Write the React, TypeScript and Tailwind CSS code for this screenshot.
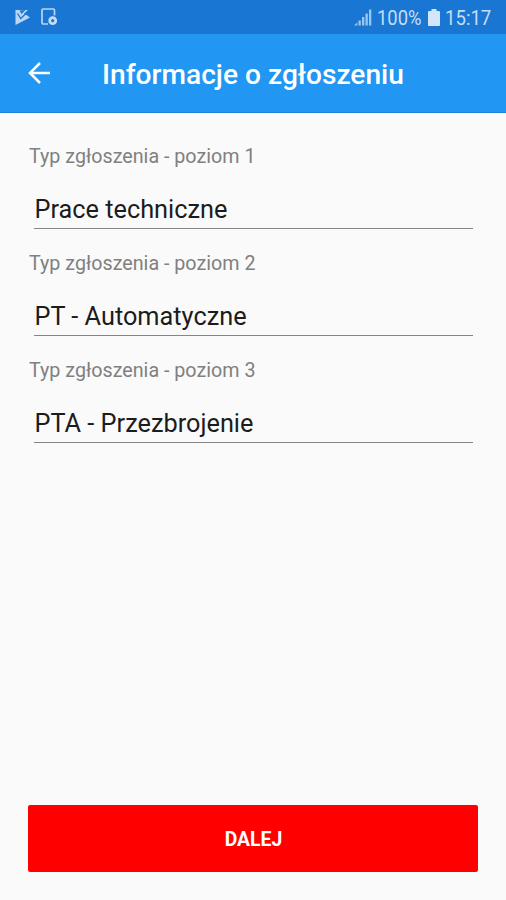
const fields = [
  { label: 'Typ zgłoszenia - poziom 1', value: 'Prace techniczne' },
  { label: 'Typ zgłoszenia - poziom 2', value: 'PT - Automatyczne' },
  { label: 'Typ zgłoszenia - poziom 3', value: 'PTA - Przezbrojenie' },
]

function PlayIcon() {
  return (
    <svg width="16" height="17" viewBox="0 0 16 17" fill="none">
      <path d="M0.500 1v15L15 8.500 11.500 6z" fill="#b9d6f4" />
      <path d="M0.500 1L5 8.500 13 1z" fill="#b9d6f4" />
      <path d="M2.500 4.500l3.300 5L14.500 1" stroke="#1976d2" strokeWidth="1.300" />
      <path d="M4.500 1.500L6.500 5l4-4z" fill="#1976d2" />
    </svg>
  )
}

function DeviceIcon() {
  return (
    <svg width="17" height="18" viewBox="0 0 17 18" fill="none">
      <path d="M7 16H2.200C1.500 16 1 15.500 1 14.800V2.200C1 1.500 1.500 1 2.200 1h10.100c.7 0 1.200.5 1.200 1.200V7.500" stroke="#b9d6f4" strokeWidth="1.700" />
      <circle cx="11.700" cy="12.700" r="3" stroke="#c4ddf6" strokeWidth="2.800" />
    </svg>
  )
}

function SignalIcon() {
  return (
    <svg width="18" height="17" viewBox="0 0 18 17" fill="#9cc5ef">
      <path d="M0 16.500L3.300 13.500v3z" />
      <rect x="4.500" y="11.500" width="2.300" height="5" />
      <rect x="8" y="8" width="2.300" height="8.500" />
      <rect x="11.500" y="4.500" width="2.300" height="12" />
      <rect x="15" y="0.500" width="2.300" height="16" />
    </svg>
  )
}

function BatteryIcon() {
  return (
    <svg width="12" height="17" viewBox="0 0 12 17" fill="#d3e6fa">
      <path d="M3.500 0h5v2H11a1 1 0 0 1 1 1v13a1 1 0 0 1-1 1H1a1 1 0 0 1-1-1V3a1 1 0 0 1 1-1h2.500z" />
    </svg>
  )
}

function StatusBar() {
  return (
    <div className="flex h-[34px] items-center bg-[#1976d2] pl-[15px] text-[20px] leading-none text-[#c4ddf6]">
      <PlayIcon />
      <div className="ml-[10px]">
        <DeviceIcon />
      </div>
      <div className="ml-auto flex w-[152px] items-center">
        <SignalIcon />
        <span className="ml-[5px] w-[51px] origin-left scale-x-[0.92] pt-px">100%</span>
        <BatteryIcon />
        <span className="ml-[5px] origin-left scale-x-[0.93] pt-px">15:17</span>
      </div>
    </div>
  )
}

function Header() {
  return (
    <header className="flex h-[79px] items-center border-b border-[#1c83dc] bg-[#2196f3] pl-[28px]">
      <svg width="23" height="22" viewBox="0 0 23 22" fill="none" stroke="white" strokeWidth="2.500">
        <path d="M22 11H2M12 1L2 11l10 10" />
      </svg>
      <h1 className="ml-[51px] pt-1 text-[28.150px] leading-8 font-medium text-white">Informacje o zgłoszeniu</h1>
    </header>
  )
}

export default function App() {
  return (
    <div className="flex h-[900px] w-[506px] flex-col bg-[#fafafa] font-[Roboto,sans-serif]">
      <StatusBar />
      <Header />
      <main className="flex flex-1 flex-col px-[28px] pt-[30px] pb-[28px]">
        {fields.map((field) => (
          <div key={field.label} className="h-[107.200px]">
            <div className="pt-px pl-px text-[19.700px] leading-[26px] text-[#808080]">{field.label}</div>
            <div className="mt-[22px] mr-[5px] ml-[6px] h-[37px] border-b-[1.500px] border-[#858585] pl-[0.500px] text-[25.300px] leading-[35px] text-[#1c1c1c]">
              {field.value}
            </div>
          </div>
        ))}
        <button className="mt-auto h-[67px] rounded-[2px] bg-[#ff0000] pt-0.5 pl-px text-[19.400px] font-bold text-white">
          DALEJ
        </button>
      </main>
    </div>
  )
}
